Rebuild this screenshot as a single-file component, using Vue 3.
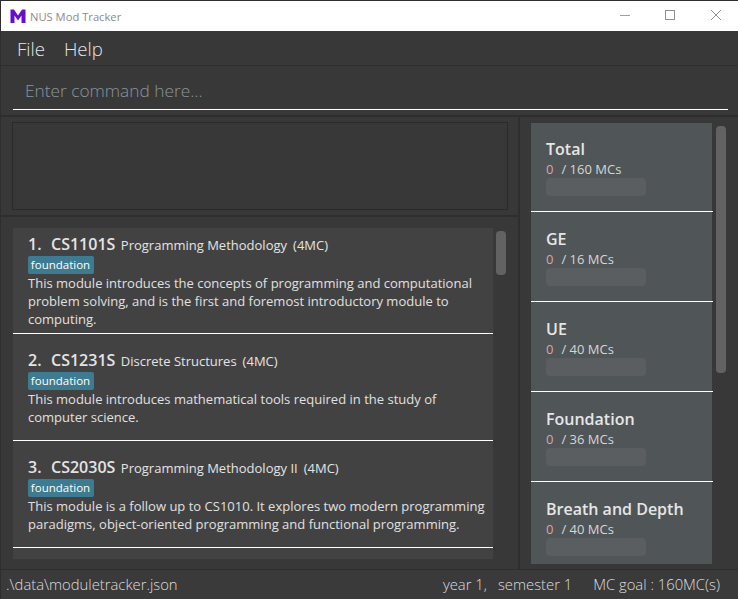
<script setup>
const modules = [
  { no: '1.', code: 'CS1101S', name: 'Programming Methodology', mc: '(4MC)', lines: ['This module introduces the concepts of programming and computational', 'problem solving, and is the first and foremost introductory module to', 'computing.'] },
  { no: '2.', code: 'CS1231S', name: 'Discrete Structures', mc: '(4MC)', lines: ['This module introduces mathematical tools required in the study of', 'computer science.'] },
  { no: '3.', code: 'CS2030S', name: 'Programming Methodology II', mc: '(4MC)', lines: ['This module is a follow up to CS1010. It explores two modern programming', 'paradigms, object-oriented programming and functional programming.'] }
]
const goals = [
  { title: 'Total', total: 160 },
  { title: 'GE', total: 16 },
  { title: 'UE', total: 40 },
  { title: 'Foundation', total: 36 },
  { title: 'Breath and Depth', total: 40 }
]
</script>

<template>
  <div class="window">
    <header class="titlebar">
      <svg class="logo" width="16" height="15" viewBox="0 0 16 15"><path d="M0.5 14V0.5H4L8 6.5L12 0.5H15.5V14H11.5V6.5L8 11.5L4.5 6.5V14Z" fill="#6510cc"/></svg>
      <span class="app-name">NUS Mod Tracker</span>
      <div class="controls">
        <svg width="12" height="12" viewBox="0 0 12 12"><path d="M1 6.5H11" stroke="#a0a0a0" fill="none"/></svg>
        <svg width="12" height="12" viewBox="0 0 12 12"><rect x="1.5" y="1.5" width="9" height="9" stroke="#8f8f8f" fill="none"/></svg>
        <svg width="12" height="12" viewBox="0 0 12 12"><path d="M1 1L11 11M11 1L1 11" stroke="#909090" fill="none"/></svg>
      </div>
    </header>
    <nav class="menu"><span>File</span><span>Help</span></nav>
    <div class="command"><div class="input">Enter command here...</div></div>
    <main class="main">
      <section class="left">
        <div class="result-pane"><div class="result"></div></div>
        <div class="list-pane">
          <div class="list">
            <article v-for="m in modules" :key="m.code" class="module">
              <div class="mod-head"><b>{{ m.no }}</b><b class="code">{{ m.code }}</b><span class="mod-name">{{ m.name }}</span><span class="mod-mc">{{ m.mc }}</span></div>
              <span class="tag">foundation</span>
              <p v-for="l in m.lines" :key="l" class="desc">{{ l }}</p>
            </article>
            <div class="module-next"></div>
          </div>
          <div class="thumb thumb-left"></div>
        </div>
      </section>
      <aside class="right">
        <div class="goals">
          <article v-for="g in goals" :key="g.title" class="goal">
            <h3>{{ g.title }}</h3>
            <div class="count"><span class="zero">0</span><span>/ {{ g.total }} MCs</span></div>
            <div class="bar"></div>
          </article>
        </div>
        <div class="thumb thumb-right"></div>
      </aside>
    </main>
    <footer class="status">
      <span class="path">.\data\moduletracker.json</span>
      <span class="year">year 1,</span>
      <span class="sem">semester 1</span>
      <span class="goal-text">MC goal : 160MC(s)</span>
    </footer>
  </div>
</template>

<style scoped>
.window { width: 738px; height: 599px; background: #383838; display: flex; flex-direction: column; overflow: hidden; font-family: "Open Sans", sans-serif; border-top: 1px solid #2e2e2e; border-left: 1px solid #2e2e2e; box-sizing: border-box; }
.titlebar { height: 30px; flex: none; background: #fff; display: flex; align-items: center; padding-left: 9px; }
.logo { margin-right: 4px; }
.app-name { font: 11.2px "Open Sans", sans-serif; color: #8b8b8b; }
.controls { margin-left: auto; display: flex; align-items: center; gap: 33px; margin-right: 16px; padding-bottom: 2px; }
.controls svg:last-child { margin-left: 1px; }
.menu { height: 35px; flex: none; display: flex; align-items: center; gap: 19px; padding-left: 16px; color: #e6e6e6; font-size: 18.6px; font-weight: 300; border-bottom: 1px solid #2e2e2e; box-sizing: border-box; }
.command { height: 51px; flex: none; padding: 0 10px 5px 12px; box-sizing: border-box; border-bottom: 2px solid #2e2e2e; }
.input { height: 44px; border-bottom: 1px solid #fff; padding: 6px 0 0 12px; display: flex; align-items: center; box-sizing: border-box; color: #8a949c; font-size: 17.3px; font-weight: 300; }
.main { flex: 1; min-height: 0; display: flex; }
.left { width: 519px; flex: none; display: flex; flex-direction: column; border-right: 2px solid #2e2e2e; box-sizing: border-box; }
.result-pane { height: 100px; flex: none; padding: 5px 10px 5px 11px; box-sizing: border-box; border-bottom: 2px solid #2e2e2e; }
.result { height: 100%; border: 1px solid #2a2a2a; box-sizing: border-box; background: #383838; }
.list-pane { flex: 1; min-height: 0; display: flex; padding: 11px 0 0 12px; overflow: hidden; }
.list { width: 480px; flex: none; }
.module { height: 107px; background: #424242; border-bottom: 1px solid #fff; box-sizing: border-box; padding: 15px 0 0 15px; color: #e0e0e0; }
.module:first-child { height: 106px; padding-top: 5px; }
.module-next { height: 11px; background: #424242; }
.mod-head { display: flex; align-items: baseline; height: 23px; color: #e4e4e4; }
.mod-head b { font-size: 16px; font-weight: 600; }
.code { margin-left: 9.5px; }
.mod-name { font-size: 13px; margin-left: 5.5px; }
.mod-mc { font-size: 13px; margin-left: 6px; }
.tag { display: block; width: 66px; height: 18px; line-height: 18px; background: #3e7b91; border-radius: 2px; color: #fff; font-size: 11.5px; text-align: center; text-indent: -1px; }
.desc { margin: 0; font-size: 13.03px; line-height: 18px; color: #e0e0e0; white-space: nowrap; }
.thumb { width: 10px; background: #626262; border-radius: 4px; flex: none; }
.thumb-left { height: 44px; margin-left: 3px; margin-top: 3px; }
.right { flex: 1; min-width: 0; display: flex; padding: 6px 0 0 11px; overflow: hidden; }
.goals { width: 182px; flex: none; height: 441px; overflow: hidden; }
.goal { height: 90px; box-sizing: border-box; background: linear-gradient(to right, #505557 181px, transparent 181px); border-bottom: 1px solid #fff; padding: 16px 0 0 15px; }
.goal:first-child { height: 89px; padding-top: 15px; }
.goal:last-child { border-bottom: none; }
.goal h3 { margin: 0; font-size: 16px; line-height: 22px; font-weight: 600; color: #e6e6e6; }
.count { display: flex; gap: 8px; font-size: 13px; line-height: 18px; color: #d6d6d6; }
.zero { color: #d9a3ad; }
.bar { width: 100px; height: 18px; border-radius: 4px; background: #5a5e60; }
.thumb-right { height: 247px; margin-left: 3px; margin-top: 3px; }
.status { height: 30px; flex: none; background: #3a3a3a; border-top: 1px solid #2e2e2e; box-sizing: border-box; display: flex; align-items: center; padding: 0 0 2px 5px; font-size: 14.8px; font-weight: 300; color: #dedede; }
.year { margin-left: auto; }
.sem { margin-left: 11px; }
.goal-text { margin-left: 21px; margin-right: 18px; }
</style>
